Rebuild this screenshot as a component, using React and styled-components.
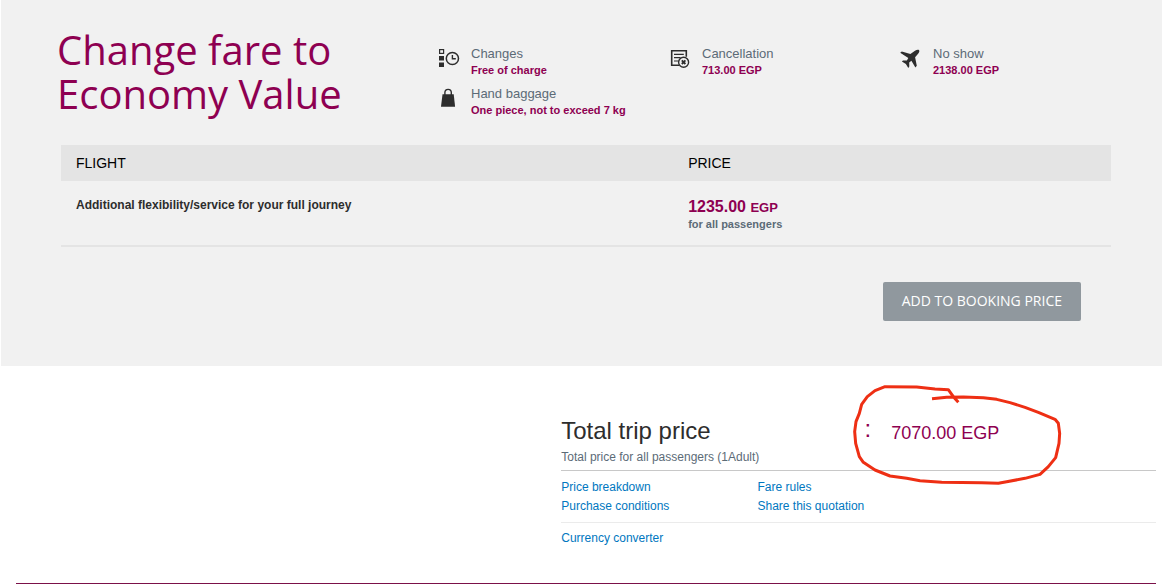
import styled, { createGlobalStyle } from "styled-components"

const GlobalStyle = createGlobalStyle`
  body {
    margin: 0;
    background: #fff;
    color: #2d2d2d;
    font-family: "Liberation Sans", Arial, sans-serif;
    font-size: 12px;
    line-height: 16px;
  }
`

const Panel = styled.section`
  margin-left: 1px;
  padding: 28px 0 45px;
  background: #f1f1f1;
`

const PanelHeader = styled.header`
  display: flex;
  align-items: flex-start;
  padding: 0 31px 0 56px;
`

const Title = styled.h1`
  flex: 0 0 381px;
  margin: 0;
  color: #8e0051;
  font-family: "Open Sans", sans-serif;
  font-size: 40px;
  font-weight: 400;
  line-height: 44px;
`

const FactGrid = styled.ul`
  flex: 1;
  display: grid;
  grid-template-columns: repeat(3, 1fr);
  row-gap: 8px;
  margin: 18px 0 0;
  padding: 0;
  list-style: none;
`

const Fact = styled.li`
  display: flex;
  gap: 10px;
  white-space: nowrap;
`

const FactIcon = styled.svg`
  flex: none;
  width: 23px;
  height: 24px;
  color: #2d2d2d;
`

const FactName = styled.div`
  color: #5c6b77;
  font-size: 13px;
`

const FactValue = styled.div`
  color: #8e0051;
  font-size: 11px;
  font-weight: 700;
`

const PanelBody = styled.div`
  margin: 27px 51px 0 60px;
`

const FareTable = styled.table`
  width: 100%;
  border-collapse: separate;
  border-spacing: 0;
  border-bottom: 2px solid #e4e4e4;
`

const HeadCell = styled.th`
  width: ${(props) => props.$width};
  box-sizing: border-box;
  padding: 10px 15px;
  background: #e4e4e4;
  color: #000;
  font-size: 14px;
  font-weight: 400;
  text-align: left;
`

const Cell = styled.td`
  padding: 16px 15px 14px;
  font-weight: 700;
  vertical-align: top;
`

const Price = styled.div`
  color: #8e0051;
  font-size: 16px;
  line-height: 20px;
`

const Currency = styled.span`
  font-size: 13px;
  line-height: 16px;
`

const PriceNote = styled.div`
  color: #5c6b77;
  font-size: 11px;
  line-height: 14px;
`

const Actions = styled.div`
  display: flex;
  justify-content: flex-end;
  padding: 35px 30px 0 0;
`

const AddButton = styled.button`
  height: 39px;
  padding: 0 19px 2px;
  border: 0;
  border-radius: 2px;
  background: #90989e;
  color: #fff;
  font-family: "Open Sans", sans-serif;
  font-size: 14px;
  cursor: pointer;
`

const Summary = styled.section`
  margin: 51px 6px 0 48.3%;
`

const Total = styled.div`
  position: relative;
  display: flex;
  padding-bottom: 5px;
  border-bottom: 1px solid #c8c8c8;
`

const TotalLabel = styled.div`
  flex: 0 0 51%;
`

const TotalTitle = styled.h2`
  margin: 0 0 4px;
  font-size: 24px;
  font-weight: 400;
  line-height: 28px;
`

const TotalNote = styled.div`
  color: #5c6b77;
`

const TotalPrice = styled.div`
  display: flex;
  gap: 20px;
  color: #8e0051;
  font-size: 18px;
  line-height: 32px;
`

const Colon = styled.span`
  font-size: 24px;
  line-height: 24px;
`

const Scribble = styled.svg`
  position: absolute;
  top: -42px;
  left: 279px;
  width: 240px;
  height: 120px;
  pointer-events: none;
`

const LinkGrid = styled.nav`
  display: grid;
  grid-template-columns: 33% 33%;
  padding: 7px 0 6px;
  line-height: 19px;
`

const MoreLinks = styled.div`
  padding: 6px 0 35px;
  border-top: 1px solid #ebebeb;
  line-height: 19px;
`

const TextLink = styled.a`
  color: #0077c0;
  text-decoration: none;
`

const Divider = styled.hr`
  height: 1px;
  margin: 0 6px 0 16px;
  border: 0;
  background: #7b1149;
`

const ChangesIcon = () => (
  <FactIcon viewBox="0 0 23 24" aria-hidden="true">
    <rect x="1.6" y="3.6" width="4" height="3.8" fill="none" stroke="currentColor" strokeWidth="1.2" />
    <path d="M1 10h5v4.4H1zM1 16.4h5v4.6H1z" fill="currentColor" />
    <circle cx="14.4" cy="12.5" r="6.1" fill="none" stroke="currentColor" strokeWidth="1.5" />
    <path d="M14.4 9v3.8h3.4" fill="none" stroke="currentColor" strokeWidth="1.4" />
  </FactIcon>
)

const CancelIcon = () => (
  <FactIcon viewBox="0 0 23 24" aria-hidden="true">
    <path d="M10.5 19.2H2.7V4.8h14.6v6" fill="none" stroke="currentColor" strokeWidth="1.6" />
    <path d="M5 8.4h9.800M5 11.700h6.600M5 15h4.400" fill="none" stroke="currentColor" strokeWidth="1.2" />
    <circle cx="14.600" cy="16.2" r="5" fill="#f1f1f1" stroke="currentColor" strokeWidth="1.4" />
    <path d="M12.800 14.4l3.6 3.6M16.4 14.4L12.800 18" stroke="currentColor" strokeWidth="1.8" />
  </FactIcon>
)

const PlaneIcon = () => (
  <FactIcon viewBox="0 0 23 24" aria-hidden="true">
    <path
      d="M0.200 6.700L1.800 5.600 10.400 8 15 4.800C16.600 3.700 18.500 3.500 19.100 4.200C19.700 4.900 19.200 6.500 18.100 7.800L15.100 11.200 16.800 19.800 15.400 21.400 11.400 14.700 9.200 16.500 9.300 20.500 8.300 21.900 5.900 18.100 1.900 15.500 3 14.400 6.900 14.500 8.300 12.100Z"
      fill="currentColor"
    />
  </FactIcon>
)

const BagIcon = () => (
  <FactIcon viewBox="0 0 23 24" aria-hidden="true">
    <path d="M4.500 8.300h11.200l1.400 12.500H3z" fill="currentColor" />
    <path d="M6.900 9.500V6.600a3.200 3.200 0 0 1 6.400 0v2.900" fill="none" stroke="currentColor" strokeWidth="1.4" />
  </FactIcon>
)

const facts = [
  { name: "Changes", value: "Free of charge", Icon: ChangesIcon },
  { name: "Cancellation", value: "713.00 EGP", Icon: CancelIcon },
  { name: "No show", value: "2138.00 EGP", Icon: PlaneIcon },
  { name: "Hand baggage", value: "One piece, not to exceed 7 kg", Icon: BagIcon },
]

const links = ["Price breakdown", "Fare rules", "Purchase conditions", "Share this quotation"]

function FarePanel() {
  return (
    <Panel>
      <PanelHeader>
        <Title>Change fare to Economy Value</Title>
        <FactGrid>
          {facts.map(({ name, value, Icon }) => (
            <Fact key={name}>
              <Icon />
              <div>
                <FactName>{name}</FactName>
                <FactValue>{value}</FactValue>
              </div>
            </Fact>
          ))}
        </FactGrid>
      </PanelHeader>
      <PanelBody>
        <FareTable>
          <thead>
            <tr>
              <HeadCell $width="58.3%">FLIGHT</HeadCell>
              <HeadCell>PRICE</HeadCell>
            </tr>
          </thead>
          <tbody>
            <tr>
              <Cell>Additional flexibility/service for your full journey</Cell>
              <Cell>
                <Price>
                  1235.00 <Currency>EGP</Currency>
                </Price>
                <PriceNote>for all passengers</PriceNote>
              </Cell>
            </tr>
          </tbody>
        </FareTable>
        <Actions>
          <AddButton type="button">ADD TO BOOKING PRICE</AddButton>
        </Actions>
      </PanelBody>
    </Panel>
  )
}

function TripSummary() {
  return (
    <Summary>
      <Total>
        <TotalLabel>
          <TotalTitle>Total trip price</TotalTitle>
          <TotalNote>Total price for all passengers (1Adult)</TotalNote>
        </TotalLabel>
        <TotalPrice>
          <Colon>:</Colon>
          <span>7070.00 EGP</span>
        </TotalPrice>
        <Scribble viewBox="0 0 720 360" aria-hidden="true">
          <polyline
            points="355,82 340,65 325,44 285,42 230,36 135,35 105,47 82,65 65,88 58,115 48,140 44,170 47,205 58,245 70,262 105,285 150,303 200,310 240,317 305,322 425,323 475,325 500,320 555,310 600,298 625,275 647,248 657,205 659,175 655,145 645,133 595,112 555,97 510,83 470,73 430,68 370,66 320,67 276,71"
            fill="none"
            stroke="#ee2f14"
            strokeWidth="9"
            strokeLinejoin="round"
          />
        </Scribble>
      </Total>
      <LinkGrid>
        {links.map((text) => (
          <TextLink href="#" key={text}>{text}</TextLink>
        ))}
      </LinkGrid>
      <MoreLinks>
        <TextLink href="#">Currency converter</TextLink>
      </MoreLinks>
    </Summary>
  )
}

function App() {
  return (
    <>
      <GlobalStyle />
      <main>
        <FarePanel />
        <TripSummary />
        <Divider />
      </main>
    </>
  )
}

export default App
